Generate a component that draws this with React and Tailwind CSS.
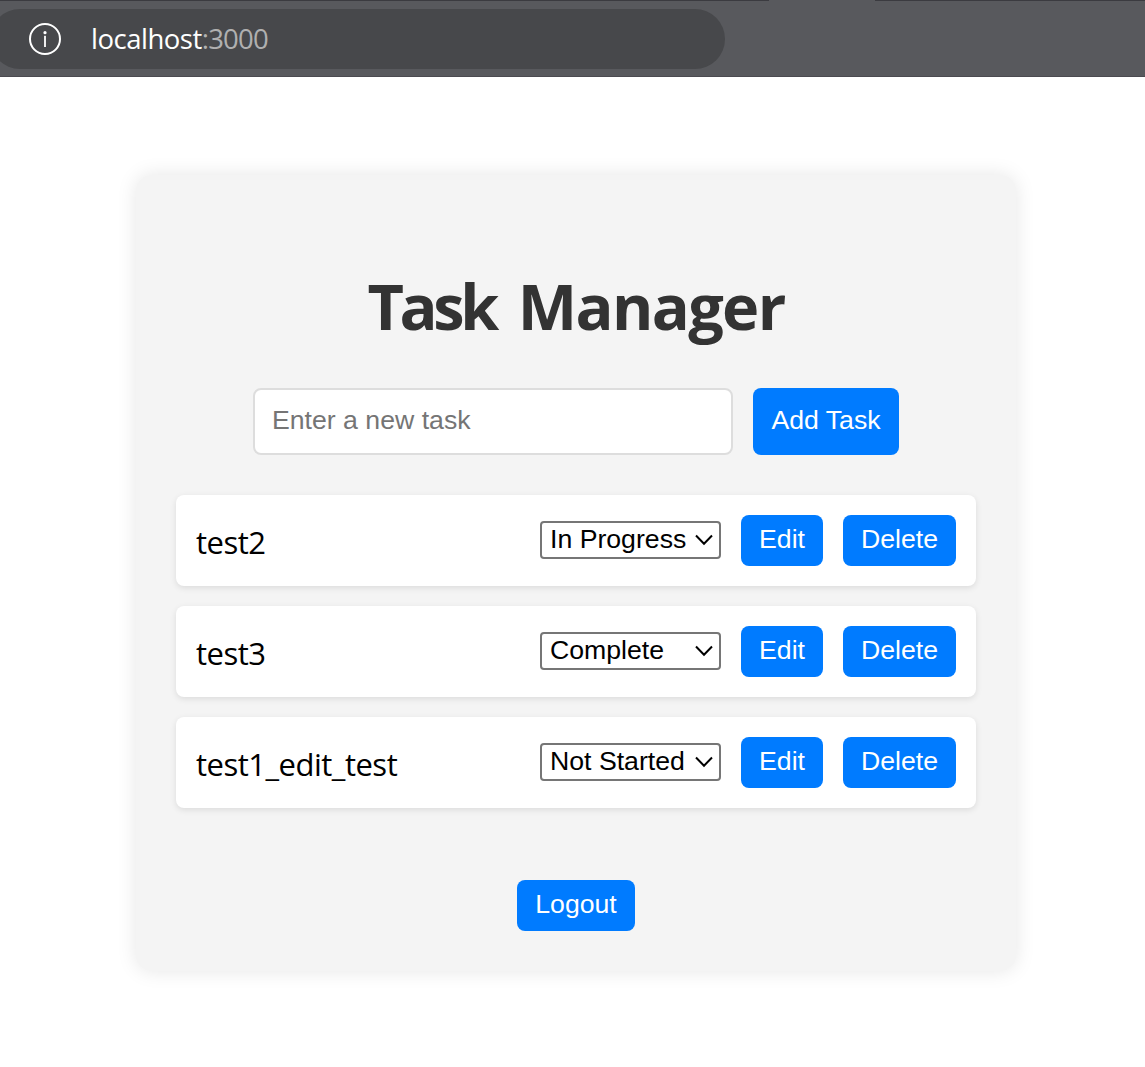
import { useState } from 'react';

const initialTasks = [
  { id: 1, name: 'test2', status: 'In Progress' },
  { id: 2, name: 'test3', status: 'Complete' },
  { id: 3, name: 'test1_edit_test', status: 'Not Started' },
];

function Button({ children, className = '' }) {
  return (
    <button
      type="button"
      className={`flex items-center justify-center rounded-lg bg-[#007bff] pb-[3px] font-['Liberation_Sans',Arial,sans-serif] text-[26.667px] leading-[30px] text-white ${className}`}
    >
      {children}
    </button>
  );
}

function StatusSelect({ value, onChange }) {
  return (
    <div className="relative mb-px h-[38px] w-[181px]">
      <select
        value={value}
        onChange={(e) => onChange(e.target.value)}
        className="block h-full w-full appearance-none rounded-[4px] border-2 border-[#767676] bg-white pb-px pl-2 font-['Liberation_Sans',Arial,sans-serif] text-[26.667px] leading-[31px] text-black"
      >
        <option>Not Started</option>
        <option>In Progress</option>
        <option>Complete</option>
      </select>
      <svg
        className="pointer-events-none absolute top-[13px] right-[8px] h-3 w-[18px]"
        viewBox="0 0 18 12"
        fill="none"
        stroke="black"
        strokeWidth="2"
      >
        <path d="M1 1.5 9 9.7 17 1.5" />
      </svg>
    </div>
  );
}

function AddressBar() {
  return (
    <header className="flex h-[77px] flex-col border-b border-[#4b4a50] bg-[#58595d]">
      <div className="flex h-px justify-between">
        <div className="w-[769px] bg-[#3b3b40]" />
        <div className="w-[270px] bg-[#3b3b40]" />
      </div>
      <div className="mt-2 -ml-[10px] flex h-[60px] w-[735px] items-center rounded-full bg-[#47484b] pl-[39px]">
        <svg className="h-8 w-8" viewBox="0 0 32 32" fill="none">
          <circle cx="16" cy="16" r="15" stroke="white" strokeWidth="2" />
          <rect x="15.1" y="12.8" width="1.8" height="11.2" fill="white" />
          <circle cx="16" cy="9.7" r="1.6" fill="white" />
        </svg>
        <span className="ml-[30px] font-['Open_Sans',sans-serif] text-[27.5px] leading-9 tracking-[-0.5px] text-white">
          localhost<span className="tracking-[-0.8px] text-[#b0b0b0]">:3000</span>
        </span>
      </div>
    </header>
  );
}

export default function App() {
  const [tasks, setTasks] = useState(initialTasks);
  const setStatus = (id, status) =>
    setTasks(tasks.map((t) => (t.id === id ? { ...t, status } : t)));

  return (
    <div className="min-h-[1067px] bg-white">
      <AddressBar />
      <main className="mt-[98px] ml-[136px] flex h-[796px] w-[880px] flex-col rounded-[16px] bg-[#f4f4f4] px-10 shadow-[0_0_20px_rgba(0,0,0,0.1)]">
        <h1 className="mt-[88px] text-center font-['Open_Sans',sans-serif] text-[63px] leading-[85px] font-bold tracking-[-1.65px] text-[#333333] [word-spacing:8px]">
          <span className="tracking-[-4.3px]">Task</span> Manager
        </h1>
        <div className="mt-10 flex justify-center gap-5">
          <input
            placeholder="Enter a new task"
            className="h-[67px] w-[480px] rounded-lg border-2 border-[#dddddd] bg-white px-[17px] pb-[2px] font-['Liberation_Sans',Arial,sans-serif] text-[26.667px] placeholder:text-[#757575]"
          />
          <Button className="h-[67px] w-[146px]">Add Task</Button>
        </div>
        <ul className="mt-10 flex flex-col gap-5">
          {tasks.map((task) => (
            <li
              key={task.id}
              className="flex h-[91px] items-center rounded-lg bg-white px-5 shadow-[0_2px_6px_rgba(0,0,0,0.1)]"
            >
              <span className="flex-1 pt-1 font-['Open_Sans',sans-serif] text-[31px] tracking-[-0.5px] text-black">
                {task.name}
              </span>
              <div className="flex items-center gap-5">
                <StatusSelect value={task.status} onChange={(s) => setStatus(task.id, s)} />
                <Button className="h-[51px] w-[82px]">Edit</Button>
                <Button className="h-[51px] w-[113px]">Delete</Button>
              </div>
            </li>
          ))}
        </ul>
        <div className="mt-[72px] flex justify-center">
          <Button className="h-[51px] w-[118px]">Logout</Button>
        </div>
      </main>
    </div>
  );
}
